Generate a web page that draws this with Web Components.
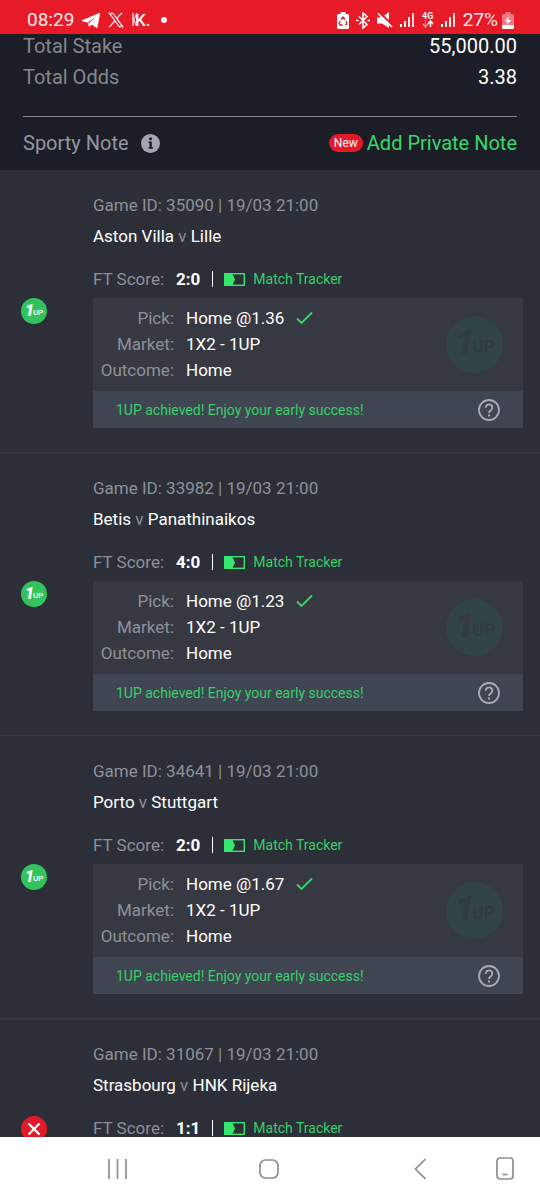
<!DOCTYPE html>
<html lang="en">
<head>
<meta charset="utf-8">
<meta name="viewport" content="width=device-width, initial-scale=1">
<title>Bet details</title>
<style>
  html, body { height: 100%; margin: 0; }
  body { background: #2c2f37; font-family: Roboto, "Noto Sans", sans-serif; color: #fff; }
</style>
</head>
<body>
<ticket-app>
  <status-bar slot="top" time="08:29" battery="27%"></status-bar>
  <ticket-summary stake="55,000.00" odds="3.38"></ticket-summary>
  <bet-card game="35090" date="19/03 21:00" home="Aston Villa" away="Lille" score="2:0" status="oneup">
    <bet-pick pick="Home @1.36" market="1X2 - 1UP" outcome="Home">1UP achieved! Enjoy your early success!</bet-pick>
  </bet-card>
  <bet-card game="33982" date="19/03 21:00" home="Betis" away="Panathinaikos" score="4:0" status="oneup">
    <bet-pick pick="Home @1.23" market="1X2 - 1UP" outcome="Home">1UP achieved! Enjoy your early success!</bet-pick>
  </bet-card>
  <bet-card game="34641" date="19/03 21:00" home="Porto" away="Stuttgart" score="2:0" status="oneup">
    <bet-pick pick="Home @1.67" market="1X2 - 1UP" outcome="Home">1UP achieved! Enjoy your early success!</bet-pick>
  </bet-card>
  <bet-card game="31067" date="19/03 21:00" home="Strasbourg" away="HNK Rijeka" score="1:1" status="lost"></bet-card>
  <nav-bar slot="bottom"></nav-bar>
</ticket-app>

<script>
class Base extends HTMLElement {
  connectedCallback() {
    if (!this.shadowRoot) this.attachShadow({ mode: 'open' }).innerHTML = this.render();
  }
  a(name) { return this.getAttribute(name) || ''; }
}

customElements.define('ticket-app', class extends Base {
  render() { return `
    <style>
      :host { display: flex; flex-direction: column; height: 100vh; }
      main { flex: 1; min-height: 0; overflow-y: auto; scrollbar-width: none; }
    </style>
    <slot name="top"></slot>
    <main><slot></slot></main>
    <slot name="bottom"></slot>`; }
});

customElements.define('signal-bars', class extends Base {
  render() { return `
    <style>:host { display: block; height: 16px; } svg { display: block; }</style>
    <svg width="15" height="16" viewBox="0 0 15 16" fill="#fff" aria-hidden="true">
      <rect x="0" y="12" width="2" height="3"/><rect x="4" y="9" width="2" height="6" opacity=".95"/>
      <rect x="8" y="5" width="2" height="10" opacity=".9"/><rect x="12" y="1" width="2" height="14" opacity=".85"/>
    </svg>`; }
});

customElements.define('status-bar', class extends Base {
  render() { return `
    <style>
      :host { display: flex; align-items: center; justify-content: space-between; box-sizing: border-box;
        height: 34px; padding: 6px 26px 0 27px; background: #e71a28; color: #ffe9ea; }
      div { display: flex; align-items: center; }
      span { font-size: 19px; line-height: 24px; }
      svg { display: block; flex: none; }
      .left { gap: 8px; }
      .right { gap: 7px; }
      .power { gap: 4px; }
    </style>
    <div class="left">
      <span>${this.a('time')}</span>
      <svg width="18" height="17" viewBox="0 0 18 17" fill="#fff" aria-hidden="true"><path d="M0 8.200 17.400 1c.5-.2.8.1.7.7l-2.600 13.600c-.1.7-.7.9-1.300.5L9.800 12.600l-2 2c-.5.5-.9.3-1-.3L5.600 10.500.300 9.300C-.300 9-.300 8.500 0 8.200zM6.300 10.100l.9 3 .4-2.500 6.200-5.800z"/></svg>
      <svg width="16" height="16" viewBox="0 0 24 24" fill="#fff" aria-hidden="true"><path fill-rule="evenodd" d="M.4 1h7.300l5.400 7.400L19.900 1h2.300l-8 8.900L23.700 23h-7.300l-6-8.300L2.800 23H.500l8.800-9.900zM3.800 2.700 17.300 21.300h3L6.800 2.700z"/></svg>
      <svg width="20" height="24" viewBox="0 0 20 24" aria-hidden="true"><path d="M1 5v13" stroke="#fff" stroke-width="1.200"/><path d="m1.500 12 3.500-7M1.500 11l3 7" stroke="#fff" stroke-width="1"/><text x="3" y="18" font-family="Roboto, sans-serif" font-weight="500" font-size="17" fill="#fff">K.</text></svg>
      <svg width="8" height="8" viewBox="0 0 8 8" aria-hidden="true"><circle cx="4" cy="4" r="3" fill="#fff"/></svg>
    </div>
    <div class="right">
      <svg width="12" height="17" viewBox="0 0 12 17" aria-hidden="true"><path d="M3.500 0h5v2h2Q12 2 12 3.500v12Q12 17 10.500 17h-9Q0 17 0 15.500v-12Q0 2 1.500 2h2z" fill="#fff"/><path d="m4 7.500 2-2.500 2 2.500M9 9l1 3-2 1M5.500 13H3L2 11.500 3 9" fill="none" stroke="#e71a28" stroke-width="1.300"/></svg>
      <svg width="14" height="17" viewBox="0 0 14 17" fill="none" stroke="#fff" stroke-width="1.600" aria-hidden="true"><path d="m3 4.500 8 8-4 3.500V1l4 3.500-8 8"/><path d="M0 8.500h2.500M11.500 8.500H14"/></svg>
      <svg width="16" height="17" viewBox="0 0 16 17" aria-hidden="true"><path d="M0 5.500h5L12 0v16l-7-4.500H0z" fill="#fff"/><path d="m2 0 14 13.500" stroke="#e71a28" stroke-width="2"/><path d="m1 1.500 14 13.500" stroke="#fff" stroke-width="1.700"/></svg>
      <signal-bars></signal-bars>
      <svg width="12" height="18" viewBox="0 0 12 18" aria-hidden="true"><text x="0" y="8" font-family="Roboto, sans-serif" font-weight="700" font-size="9" fill="#fff">4G</text><path d="M3.500 9.500v6M1 13l2.500 3L6 13" fill="none" stroke="#ff9299" stroke-width="1.200"/><path d="M8.500 16v-6M6 13l2.500-3 2.500 3" fill="none" stroke="#fff" stroke-width="1.500"/></svg>
      <signal-bars></signal-bars>
      <div class="power">
        <span>${this.a('battery')}</span>
        <svg width="12" height="17" viewBox="0 0 12 17" aria-hidden="true"><path d="M3.500 0h5v2h2Q12 2 12 3.500v12Q12 17 10.500 17h-9Q0 17 0 15.500v-12Q0 2 1.500 2h2z" fill="#f3767d"/><path d="M0 13h12v2.500Q12 17 10.500 17h-9Q0 17 0 15.500z" fill="#fff"/><path d="M7.500 4 2.500 9.500h3L4.500 13 9.500 8h-3z" fill="#fff"/></svg>
      </div>
    </div>`; }
});

customElements.define('ticket-summary', class extends Base {
  render() { return `
    <style>
      :host { display: block; padding: 0 23px 15px; background: #1b1e26; font-size: 20px; line-height: 24px; color: #85878c; }
      dl { display: grid; gap: 7px; margin: 0; padding-bottom: 27px; border-bottom: 1px solid #85878f; }
      dl div, .note, .label, .add { display: flex; align-items: center; }
      dl div, .note { justify-content: space-between; }
      dd { margin: 0; color: #fff; }
      .note { padding-top: 14px; }
      .label { gap: 12px; color: #9496a0; }
      .add { gap: 4px; }
      .add span { padding: 0 5px; border-radius: 9px; background: #e31b29; color: #fff; font-size: 12px; line-height: 18px; }
      button { display: block; padding: 0; border: 0; background: none; }
      svg { display: block; }
      a { color: #37d96c; text-decoration: none; }
    </style>
    <dl>
      <div><dt>Total Stake</dt><dd>${this.a('stake')}</dd></div>
      <div><dt>Total Odds</dt><dd>${this.a('odds')}</dd></div>
    </dl>
    <div class="note">
      <div class="label">Sporty Note
        <button type="button" aria-label="About Sporty Note"><svg width="19" height="19" viewBox="0 0 19 19"><circle cx="9.500" cy="9.500" r="9.500" fill="#a3a5b3"/><circle cx="9.500" cy="4.700" r="1.500" fill="#1b1e26"/><path d="M7.500 7.500h3.300v5.700H12v1.500H7.500v-1.500h1V9h-1z" fill="#1b1e26"/></svg></button>
      </div>
      <div class="add"><span>New</span><a href="#note">Add Private Note</a></div>
    </div>`; }
});

customElements.define('one-up-logo', class extends Base {
  render() { return `
    <style>
      :host { display: block; width: 26px; height: 26px; }
      svg { display: block; width: 100%; height: 100%; }
      circle { fill: var(--disc, #32c35e); }
      text { fill: var(--mark, #fff); font-family: Roboto, sans-serif; font-weight: 900; }
      .up { font-weight: 500; }
    </style>
    <svg viewBox="0 0 26 26" role="img" aria-label="1UP">
      <circle cx="13" cy="13" r="13"/>
      <text x="4" y="18" font-size="16" font-style="italic">1</text>
      <text class="up" x="12" y="17" font-size="8">UP</text>
    </svg>`; }
});

customElements.define('bet-card', class extends Base {
  render() {
    const icon = this.a('status') === 'lost'
      ? '<svg width="26" height="26" viewBox="0 0 26 26" role="img" aria-label="Lost"><circle cx="13" cy="13" r="13" fill="#e41a29"/><path d="m7.500 7.500 11 11m0-11-11 11" stroke="#fff" stroke-width="2.300"/></svg>'
      : '<one-up-logo></one-up-logo>';
    return `
    <style>
      :host { display: grid; grid-template-columns: 50px 1fr; column-gap: 22px; align-items: center; box-sizing: border-box;
        min-height: 220px; padding: 0 17px 0 21px; background: #2c2f37; border-bottom: 1px solid #363a42;
        font-size: 17px; line-height: 24px; color: #8f919a; }
      article { align-self: start; min-width: 0; padding: 23px 0 24px; }
      svg { display: block; }
      h2 { margin: 7px 0 19px; font: inherit; }
      b { font-weight: 400; color: #fff; }
      .score { display: flex; align-items: center; margin-bottom: 7px; }
      strong { margin: 0 12px; font-weight: 700; color: #fff; }
      i { width: 1px; height: 16px; margin-right: 11px; background: #fff; }
      a { display: flex; align-items: center; gap: 8px; color: #37d06a; font-size: 14px; text-decoration: none; }
    </style>
    ${icon}
    <article>
      <div>Game ID: ${this.a('game')} | ${this.a('date')}</div>
      <h2><b>${this.a('home')}</b> v <b>${this.a('away')}</b></h2>
      <div class="score">FT Score: <strong>${this.a('score')}</strong><i></i>
        <a href="#tracker"><svg width="21" height="13" viewBox="0 0 21 13" aria-hidden="true"><rect x=".7" y=".7" width="19.600" height="11.600" fill="none" stroke="#37e66e" stroke-width="1.400"/><path d="M0 0h8l3 6.500L8 13H0z" fill="#37e66e"/></svg>Match Tracker</a>
      </div>
      <slot></slot>
    </article>`; }
});

customElements.define('bet-pick', class extends Base {
  render() { return `
    <style>
      :host { display: block; background: #363942; }
      .body { display: flex; justify-content: space-between; align-items: center; padding: 7px 20px 8px 0; }
      dl { display: grid; grid-template-columns: 81px auto; column-gap: 12px; margin: 0; line-height: 26px; }
      dt { text-align: right; }
      dd { display: flex; align-items: center; gap: 12px; margin: 0; color: #fff; }
      one-up-logo { width: 57px; height: 57px; --disc: #324446; --mark: #343a42; }
      footer { display: flex; justify-content: space-between; align-items: center; height: 37px; padding: 0 23px;
        background: #404552; color: #37d06a; font-size: 14px; line-height: 20px; }
      button { display: block; padding: 0; border: 0; background: none; }
      svg { display: block; }
    </style>
    <div class="body">
      <dl>
        <dt>Pick:</dt><dd>${this.a('pick')}<svg width="17" height="14" viewBox="0 0 17 14" role="img" aria-label="Won"><path d="m1 7.500 4.500 4.500L16 1.500" fill="none" stroke="#37d96c" stroke-width="1.800"/></svg></dd>
        <dt>Market:</dt><dd>${this.a('market')}</dd>
        <dt>Outcome:</dt><dd>${this.a('outcome')}</dd>
      </dl>
      <one-up-logo></one-up-logo>
    </div>
    <footer><slot></slot>
      <button type="button" aria-label="Help"><svg width="22" height="22" viewBox="0 0 22 22" fill="none" stroke="#a9abb5"><circle cx="11" cy="11" r="10" stroke-width="1.800"/><path d="M7.700 8.700a3.300 3.300 0 1 1 5.300 2.600c-1.300 1-2 1.400-2 2.700" stroke-width="1.900"/><path d="M11 15.500v2" stroke-width="2"/></svg></button>
    </footer>`; }
});

customElements.define('nav-bar', class extends Base {
  render() { return `
    <style>
      :host { display: block; flex: none; background: #fff; }
      nav { display: grid; grid-template-columns: 1fr 1fr 1fr 20px; align-items: center; height: 63px; padding: 0 25px 0 42px; }
      button { display: grid; place-items: center; padding: 0; border: 0; background: none; height: 48px; }
      svg { display: block; fill: none; stroke: #8d8d8d; stroke-width: 1.700; }
    </style>
    <nav aria-label="System">
      <button type="button" aria-label="Recent apps"><svg width="20" height="20" viewBox="0 0 20 20"><path d="M1 0v20M9.500 0v20M18 0v20"/></svg></button>
      <button type="button" aria-label="Home"><svg width="20" height="20" viewBox="0 0 20 20"><rect x="1" y="1" width="18" height="18" rx="5.500"/></svg></button>
      <button type="button" aria-label="Back"><svg width="12" height="22" viewBox="0 0 12 22"><path d="M11.500 1 1.500 11l10 10"/></svg></button>
      <button type="button" aria-label="One-handed mode"><svg width="18" height="23" viewBox="0 0 18 23"><rect x="1" y="1" width="16" height="21" rx="3"/><path d="M6.500 17.500h5"/></svg></button>
    </nav>`; }
});
</script>
</body>
</html>
